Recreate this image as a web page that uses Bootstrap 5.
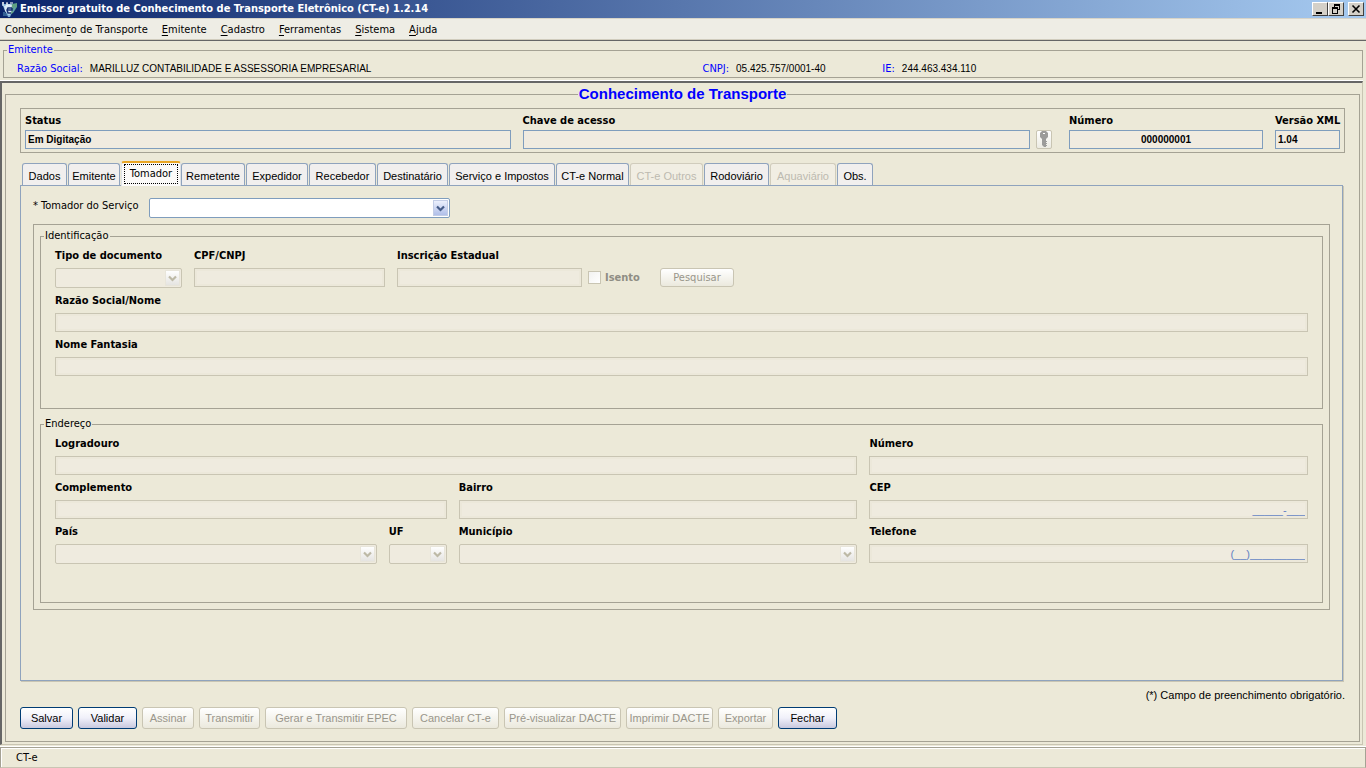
<!DOCTYPE html>
<html lang="pt-BR">
<head>
<meta charset="utf-8">
<meta name="viewport" content="width=device-width, initial-scale=1">
<title>Emissor gratuito de Conhecimento de Transporte Eletrônico (CT-e)</title>
<link rel="stylesheet" href="https://cdn.jsdelivr.net/npm/bootstrap@5.3.0/dist/css/bootstrap.min.css">
<style>
:root{--face:#ece9d8;--edge:#a5a294;--off:#c9c5b3;--blue:#7f9dbd;--ui:"DejaVu Sans Condensed","DejaVu Sans",sans-serif;--arial:"Liberation Sans",Arial,sans-serif}
body{font-family:var(--ui);font-size:11px;line-height:14px;color:#000;background:var(--face)}
a{color:inherit;text-decoration:none}
/* window title */
.titlebar{height:18px;background:linear-gradient(90deg,#0a246a,#a6caf0);color:#fff;padding:0 2px 0 1px}
.titlebar strong{margin-left:2px}
.win-btn{width:16px;height:14px;background:#d4d0c8;border:1px solid;border-color:#fff #404040 #404040 #fff;padding:0;line-height:0}
.win-btn svg{display:block}
.menubar{height:22px;background:#eeede5;border-top:1px solid #d8d4c8;border-bottom:1px solid #d0ccbd;padding:1px 5px 0;gap:14px}
.menubar u{text-underline-offset:2px}
/* titled frames */
.frame{border:1px solid var(--edge);min-width:0}
.frame>legend{float:none;width:auto;margin:0 0 0 3px;padding:0 1px;font-size:11px;line-height:14px}
.issuer{border-top:1px solid #666;padding:2px 3px}
.issuer .frame{height:35px}
.issuer-grid{display:grid;grid-template-columns:686fr 180fr 480fr;padding:5px 0 0 13px}
.issuer-grid>div{display:flex;gap:7px}
.issuer legend,.issuer dt{color:#00f;font-weight:400}
.issuer dd{font-family:var(--arial);font-size:10px;margin:0}
.workarea{border-top:2px solid #666;border-left:2px solid #666;border-bottom:1px solid #c9c5b3;box-shadow:0 -1px #fff;padding:2px 2px 2px 3px;margin:1px 3px 0 0;border-right:1px solid #c9c5b3}
.workarea>.frame>legend{font:bold 15px/18px var(--arial);color:#00f;margin:0 auto;padding:0 1px}
.work-body{padding:5px 14px 12px}
.head-grid{display:grid;grid-template-columns:minmax(0,486fr) minmax(0,535fr) 194px 65px;column-gap:12px;padding:5px 4px 3px;border:1px solid var(--edge)}
.head-grid label.cap{margin-bottom:2px}
label.cap{display:block;font-weight:700;white-space:nowrap}
.pe-key{padding-right:5px}
.key-row{display:flex;gap:6px}
.txt{display:block;width:100%;min-width:0;height:19px;border:1px solid var(--blue);border-radius:0;background:#f0ebe0;padding:0 2px;font:bold 10px/17px var(--arial);color:#000;outline:0}
.txt:disabled{border-color:var(--off);box-shadow:inset 0 0 0 2px #ece8da;background:#efebdf;font:11px/17px var(--arial);color:#5f80c4;opacity:1}
.key-btn{width:16px;height:19px;border:1px solid var(--off);border-radius:2px;background:linear-gradient(#fff,#ecebe2);padding:0;flex:none}
/* tab strip */
.tabstrip{display:grid;grid-template-columns:46px 53px 60px 65px 63px 68px 72px 107px 74px 74px 66px 67px 37px;margin:8px 0 0 2px;height:24px;align-items:end;border:0}
.tabstrip .nav-link{font:11px/20px var(--arial);color:#000;height:22px;margin:0 1px 0 0;padding:2px 0 0;text-align:center;border:1px solid #8fa3bd;border-bottom:0;border-radius:3px 3px 0 0;background:#f1efee;white-space:nowrap}
.tabstrip .nav-link.disabled{color:#bdbab0;border-color:#d0ccbc;background:#f1eee3}
.tabstrip .nav-link.active{position:relative;height:25px;margin:0 0 -1px;padding:0;border-top:2px solid #eaa623;background:#fbfaf8;color:#000;font-family:var(--ui)}
.tabstrip .nav-link.active span{display:block;margin:1px 2px;height:20px;line-height:18px;border:1px dotted #000}
.tabpage{min-height:calc(100vh - 272px);border:1px solid #8fa3bd;box-shadow:1px 1px #c9c5b3;padding:12px 12px 16px;margin-right:2px}
/* drop-downs */
.combo{display:block;width:100%;height:20px;appearance:none;border:1px solid var(--blue);border-radius:2px;padding:0 20px 0 4px;font:11px/18px var(--ui);background:#fff url("data:image/svg+xml,%3Csvg xmlns='http://www.w3.org/2000/svg' width='16' height='16'%3E%3Cdefs%3E%3ClinearGradient id='g' x2='0' y2='1'%3E%3Cstop stop-color='%23eef2fd'/%3E%3Cstop offset='1' stop-color='%23aebde8'/%3E%3C/linearGradient%3E%3C/defs%3E%3Crect x='.5' y='.5' width='14' height='15' fill='url(%23g)' stroke='%23c3cde6'/%3E%3Cpath d='M4 6.500l3.500 3.500 3.500-3.500' fill='none' stroke='%23455c88' stroke-width='2.200'/%3E%3C/svg%3E") no-repeat right 0 top 1px}
.combo:disabled{border-color:var(--off);opacity:1;background:#efebdf url("data:image/svg+xml,%3Csvg xmlns='http://www.w3.org/2000/svg' width='16' height='16'%3E%3Cdefs%3E%3ClinearGradient id='g' x2='0' y2='1'%3E%3Cstop stop-color='%23fff'/%3E%3Cstop offset='1' stop-color='%23e4e3e0'/%3E%3C/linearGradient%3E%3C/defs%3E%3Crect x='.5' y='.5' width='14' height='15' fill='url(%23g)' stroke='%23e8e5da'/%3E%3Cpath d='M4 6.500l3.500 3.500 3.500-3.500' fill='none' stroke='%23bdb9a6' stroke-width='2.200'/%3E%3C/svg%3E") no-repeat right 0 top 1px}
.service-row{display:grid;grid-template-columns:116px minmax(0,301px);line-height:16px}
.group-box{border:1px solid var(--edge);padding:4px 6px 6px;margin-top:6px}
.group-box .frame+.frame{margin-top:8px}
.fields{padding:6px 14px 0;display:grid;row-gap:6px}
.fields label.cap{margin-bottom:5px}
.ident{min-height:165px;align-content:start}
.ident-top{display:grid;grid-template-columns:127px 191px 185px 54px 74px;column-gap:12px;align-items:start}
.ident-top .check{margin:19px 0 0 -6px;gap:4px;height:19px;font-weight:700;color:#8f8d84}
.check input{appearance:none;width:13px;height:13px;border:1px solid var(--off);background:linear-gradient(135deg,#f2f2f0,#fff);margin:0;flex:none}
.addr{min-height:171px;align-content:start;grid-template-columns:minmax(0,322fr) 58px minmax(0,399fr) minmax(0,439fr);column-gap:12px}
.s3{grid-column:span 3}.s2{grid-column:span 2}
/* push buttons */
.push{font:11px/14px var(--arial);height:22px;padding:0;border:1px solid #003c74;border-radius:3px;background:linear-gradient(#fff,#f0f0fa 50%,#c9c9de);color:#000;white-space:nowrap}
.push:disabled{border-color:var(--off);color:#99968b;background:linear-gradient(#fff,#f5f4ee 50%,#ebe9dd)}
.push.slim{height:19px;margin-top:19px;font-family:var(--ui)}
.note{font:11px/14px var(--arial);text-align:right;margin:7px 0 5px}
.actions{display:grid;grid-template-columns:53px 59px 52px 61px 142px 87px 117px 87px 55px 59px;column-gap:5px}
.statusbar{height:21px;border:1px solid var(--edge);border-bottom-color:#c9c5b3;box-shadow:inset 1px 1px #fff,0 -1px #fff;padding-left:15px;margin-top:2px;line-height:20px}
</style>
</head>
<body>
<div class="d-flex flex-column min-vh-100">
  <header class="titlebar d-flex align-items-center">
    <svg width="17" height="17" viewBox="0 0 17 17" aria-hidden="true"><path d="M1 3h14L9 16H7z" fill="#7fb0d8"/><path d="M3 5l5-2 6 2-2 5-4 4-4-4z" fill="#d8e8f6"/><path d="M11 3l5-1v4l-4 6-2 1z" fill="#5f9f82"/><path d="M1 2h2M2 1v4M5 2h2M6 2v3M9 2h3" stroke="#fff"/><path d="M11 7H7l-1 2 1 3h3M6 9h5V7" fill="none" stroke="#162f72" stroke-width="1.500"/><path d="M3 11v4M5 12v3M12 11l2-5" stroke="#5d9dbd"/></svg>
    <strong class="text-nowrap">Emissor gratuito de Conhecimento de Transporte Eletrônico (CT-e) 1.2.14</strong>
    <div class="d-flex ms-auto">
      <button type="button" class="win-btn" aria-label="Minimizar"><svg width="14" height="12"><path d="M3 9h6v2H3z"/></svg></button>
      <button type="button" class="win-btn" aria-label="Restaurar"><svg width="14" height="12"><path d="M5 1h6v2H5zM5 3h1v1H5zM10 3h1v4h-1zM9 6h1v1H9zM3 4h6v2H3zM3 6h1v5H3zM8 6h1v5H8zM4 10h4v1H4z"/></svg></button>
      <button type="button" class="win-btn ms-1" aria-label="Fechar janela"><svg width="14" height="12"><path d="M3.500 2.500l7 7M10.500 2.500l-7 7" stroke="#000" stroke-width="1.600"/></svg></button>
    </div>
  </header>
  <nav class="menubar d-flex align-items-center text-nowrap" aria-label="Menu principal">
    <a href="#">Conhecimen<u>t</u>o de Transporte</a><a href="#"><u>E</u>mitente</a><a href="#"><u>C</u>adastro</a><a href="#"><u>F</u>erramentas</a><a href="#"><u>S</u>istema</a><a href="#"><u>A</u>juda</a>
  </nav>
  <section class="issuer">
    <fieldset class="frame"><legend>Emitente</legend>
      <dl class="issuer-grid mb-0 text-nowrap">
        <div><dt>Razão Social:</dt><dd>MARILLUZ CONTABILIDADE E ASSESSORIA EMPRESARIAL</dd></div>
        <div><dt>CNPJ:</dt><dd>05.425.757/0001-40</dd></div>
        <div><dt>IE:</dt><dd>244.463.434.110</dd></div>
      </dl>
    </fieldset>
  </section>
  <main class="workarea flex-grow-1 d-flex flex-column">
    <fieldset class="frame flex-grow-1"><legend>Conhecimento de Transporte</legend>
      <div class="work-body">
        <div class="head-grid">
          <div><label class="cap" for="status">Status</label><input class="txt" id="status" readonly value="Em Digitação"></div>
          <div class="pe-key"><label class="cap" for="chave">Chave de acesso</label>
            <div class="key-row"><input class="txt" id="chave" readonly>
              <button type="button" class="key-btn" disabled aria-label="Gerar chave"><svg class="d-block" width="14" height="17" viewBox="0 0 14 17"><path d="M5 0h4l2 2v4L9 8v8H7l-2-2V8L3 6V2z" fill="#9c9c9a"/><path d="M6 2h2v1H6z" fill="#fff"/><path d="M9 10h1v1H9zM9 12h1v1H9zM9 14h1v1H9z" fill="#9c9c9a"/></svg></button></div></div>
          <div><label class="cap" for="numero">Número</label><input class="txt text-center" id="numero" readonly value="000000001"></div>
          <div><label class="cap" for="versao">Versão XML</label><input class="txt" id="versao" readonly value="1.04"></div>
        </div>
        <nav class="nav nav-tabs tabstrip" aria-label="Seções">
          <a class="nav-link" href="#">Dados</a><a class="nav-link" href="#">Emitente</a><a class="nav-link active" aria-current="page" href="#"><span>Tomador</span></a><a class="nav-link" href="#">Remetente</a><a class="nav-link" href="#">Expedidor</a><a class="nav-link" href="#">Recebedor</a><a class="nav-link" href="#">Destinatário</a><a class="nav-link" href="#">Serviço e Impostos</a><a class="nav-link" href="#">CT-e Normal</a><a class="nav-link disabled" aria-disabled="true" href="#">CT-e Outros</a><a class="nav-link" href="#">Rodoviário</a><a class="nav-link disabled" aria-disabled="true" href="#">Aquaviário</a><a class="nav-link" href="#">Obs.</a>
        </nav>
        <div class="tabpage">
          <div class="service-row"><label for="tomador">* Tomador do Serviço</label><select class="combo" id="tomador"><option></option></select></div>
          <div class="group-box">
            <fieldset class="frame"><legend>Identificação</legend>
              <div class="fields ident">
                <div class="ident-top">
                  <div><label class="cap" for="tipo">Tipo de documento</label><select class="combo" id="tipo" disabled><option></option></select></div>
                  <div><label class="cap" for="cpf">CPF/CNPJ</label><input class="txt" id="cpf" disabled></div>
                  <div><label class="cap" for="ie">Inscrição Estadual</label><input class="txt" id="ie" disabled></div>
                  <label class="check d-flex align-items-center"><input type="checkbox" disabled>Isento</label>
                  <button type="button" class="push slim" disabled>Pesquisar</button>
                </div>
                <div><label class="cap" for="razao">Razão Social/Nome</label><input class="txt" id="razao" disabled></div>
                <div><label class="cap" for="fantasia">Nome Fantasia</label><input class="txt" id="fantasia" disabled></div>
              </div>
            </fieldset>
            <fieldset class="frame"><legend>Endereço</legend>
              <div class="fields addr">
                <div class="s3"><label class="cap" for="logradouro">Logradouro</label><input class="txt" id="logradouro" disabled></div>
                <div><label class="cap" for="num-end">Número</label><input class="txt" id="num-end" disabled></div>
                <div class="s2"><label class="cap" for="compl">Complemento</label><input class="txt" id="compl" disabled></div>
                <div><label class="cap" for="bairro">Bairro</label><input class="txt" id="bairro" disabled></div>
                <div><label class="cap" for="cep">CEP</label><input class="txt text-end" id="cep" disabled value="_____-___"></div>
                <div><label class="cap" for="pais">País</label><select class="combo" id="pais" disabled><option></option></select></div>
                <div><label class="cap" for="uf">UF</label><select class="combo" id="uf" disabled><option></option></select></div>
                <div><label class="cap" for="municipio">Município</label><select class="combo" id="municipio" disabled><option></option></select></div>
                <div><label class="cap" for="fone">Telefone</label><input class="txt text-end" id="fone" disabled value="(__)_________"></div>
              </div>
            </fieldset>
          </div>
        </div>
        <p class="note">(*) Campo de preenchimento obrigatório.</p>
        <div class="actions">
          <button type="button" class="push">Salvar</button><button type="button" class="push">Validar</button><button type="button" class="push" disabled>Assinar</button><button type="button" class="push" disabled>Transmitir</button><button type="button" class="push" disabled>Gerar e Transmitir EPEC</button><button type="button" class="push" disabled>Cancelar CT-e</button><button type="button" class="push" disabled>Pré-visualizar DACTE</button><button type="button" class="push" disabled>Imprimir DACTE</button><button type="button" class="push" disabled>Exportar</button><button type="button" class="push">Fechar</button>
        </div>
      </div>
    </fieldset>
  </main>
  <footer class="statusbar">CT-e</footer>
</div>
<script src="https://cdn.jsdelivr.net/npm/bootstrap@5.3.0/dist/js/bootstrap.bundle.min.js"></script>
</body>
</html>
